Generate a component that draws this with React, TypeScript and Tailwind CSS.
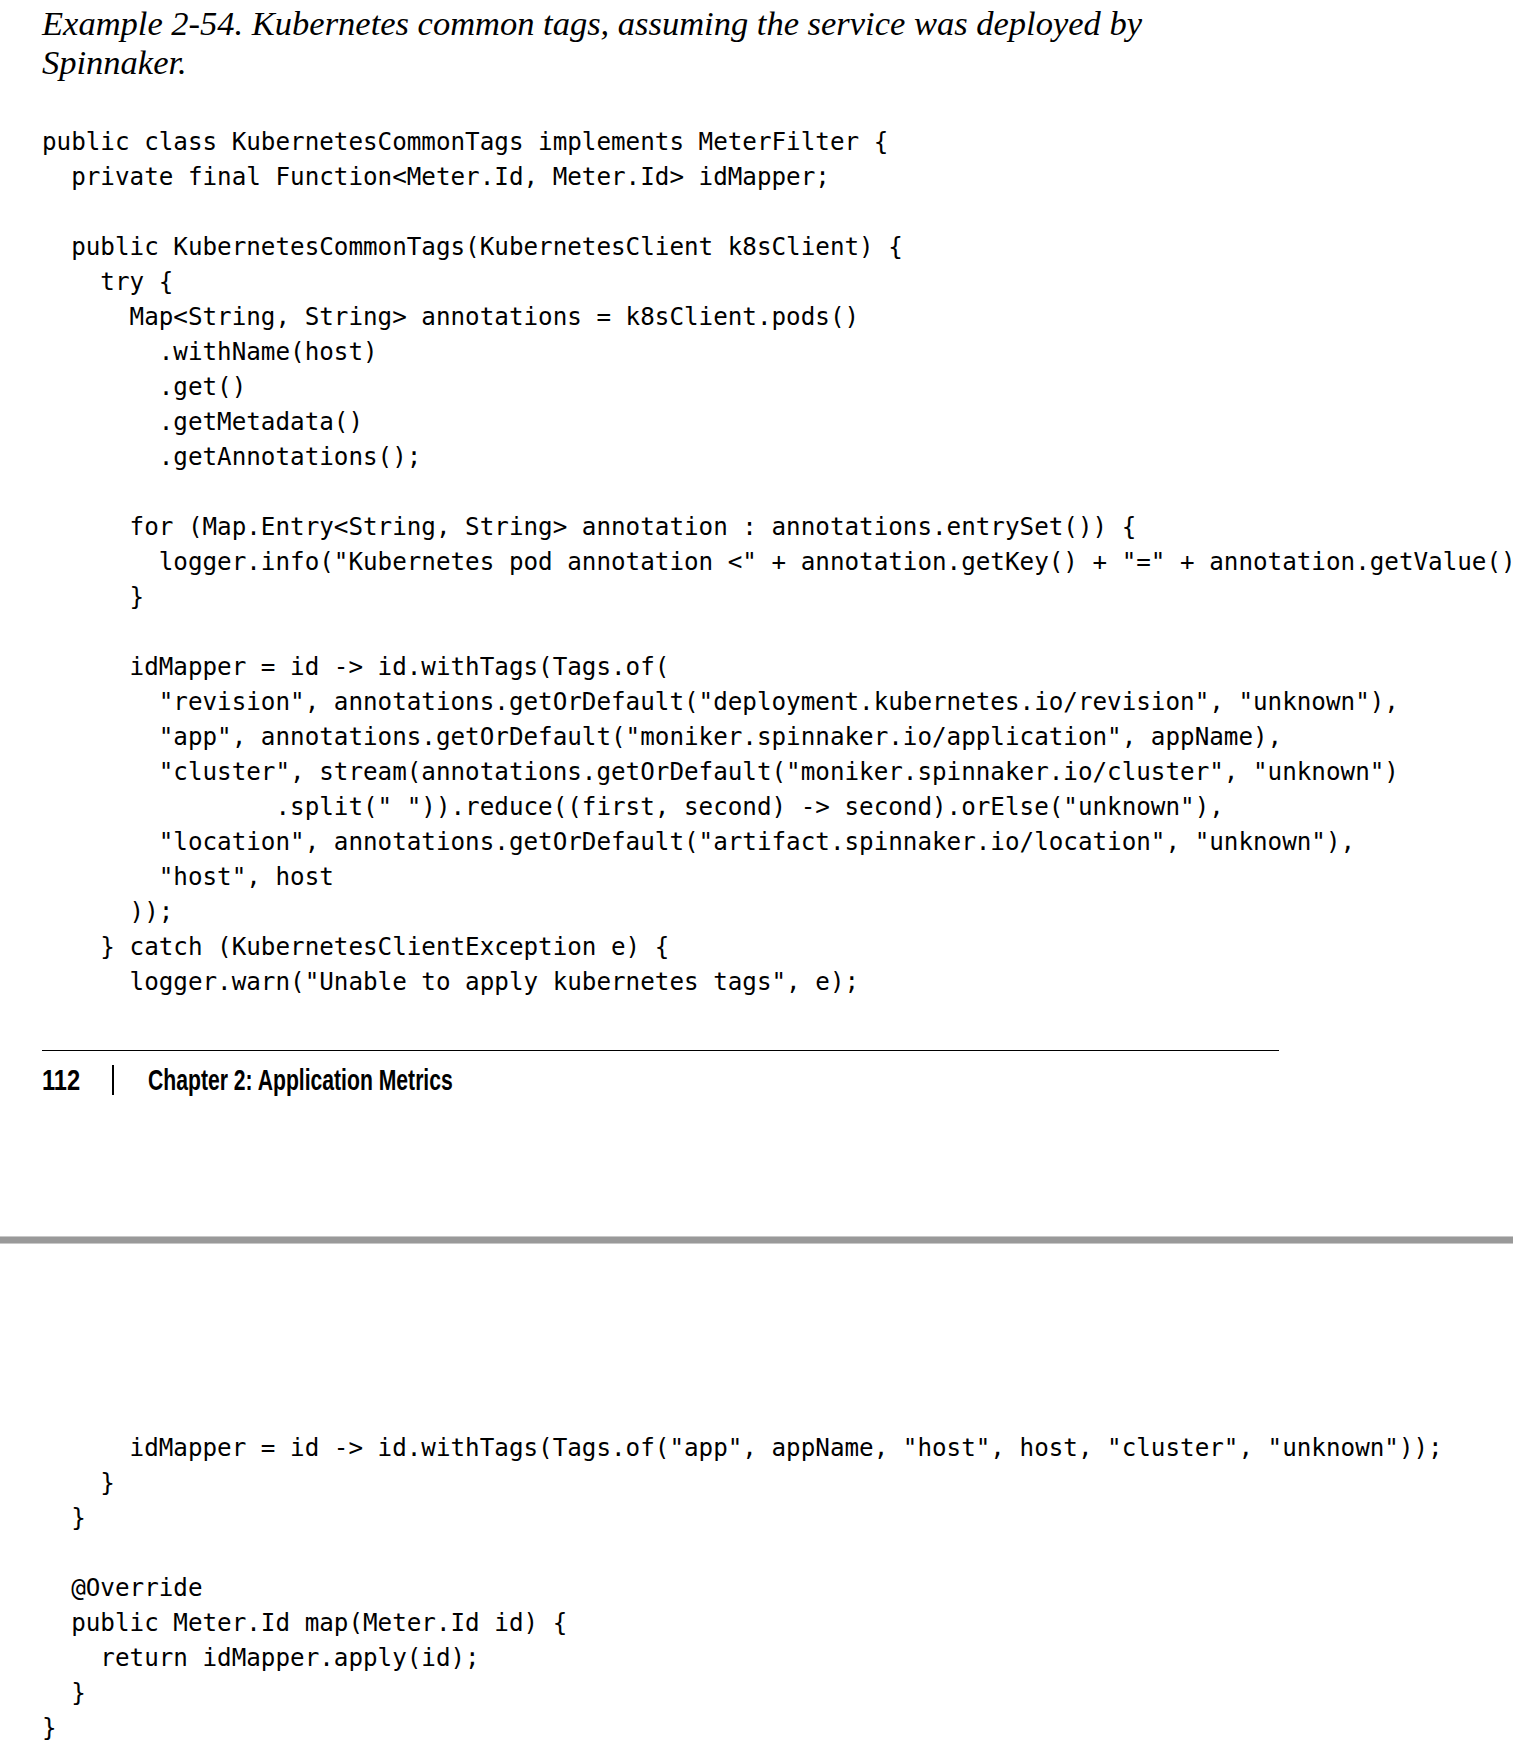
import * as React from 'react'

const topCode = [
  'public class KubernetesCommonTags implements MeterFilter {',
  '  private final Function<Meter.Id, Meter.Id> idMapper;',
  '',
  '  public KubernetesCommonTags(KubernetesClient k8sClient) {',
  '    try {',
  '      Map<String, String> annotations = k8sClient.pods()',
  '        .withName(host)',
  '        .get()',
  '        .getMetadata()',
  '        .getAnnotations();',
  '',
  '      for (Map.Entry<String, String> annotation : annotations.entrySet()) {',
  '        logger.info("Kubernetes pod annotation <" + annotation.getKey() + "=" + annotation.getValue() + ">");',
  '      }',
  '',
  '      idMapper = id -> id.withTags(Tags.of(',
  '        "revision", annotations.getOrDefault("deployment.kubernetes.io/revision", "unknown"),',
  '        "app", annotations.getOrDefault("moniker.spinnaker.io/application", appName),',
  '        "cluster", stream(annotations.getOrDefault("moniker.spinnaker.io/cluster", "unknown")',
  '                .split(" ")).reduce((first, second) -> second).orElse("unknown"),',
  '        "location", annotations.getOrDefault("artifact.spinnaker.io/location", "unknown"),',
  '        "host", host',
  '      ));',
  '    } catch (KubernetesClientException e) {',
  '      logger.warn("Unable to apply kubernetes tags", e);',
]

const bottomCode = [
  '      idMapper = id -> id.withTags(Tags.of("app", appName, "host", host, "cluster", "unknown"));',
  '    }',
  '  }',
  '',
  '  @Override',
  '  public Meter.Id map(Meter.Id id) {',
  '    return idMapper.apply(id);',
  '  }',
  '}',
]

const CodeBlock: React.FC<{ lines: string[] }> = ({ lines }) => {
  return (
    <pre className="m-0 whitespace-pre font-['DejaVu_Sans_Mono',monospace] text-[24.24px] leading-[35px] text-black">
      {lines.map((l, i) => (
        <div key={i} className="h-[35px]">{l}</div>
      ))}
    </pre>
  )
}

export default function App() {
  return (
    <div className="w-[1513px] h-[1748px] overflow-hidden bg-white text-black">
      <div className="pl-[42px] pt-[4px]">
        <h1 className="whitespace-nowrap font-['Liberation_Serif',serif] italic font-normal text-[34.5px] leading-[39px]">
          Example 2-54. Kubernetes common tags, assuming the service was deployed by
          <br />
          Spinnaker.
        </h1>

        <div className="mt-[42px]">
          <CodeBlock lines={topCode} />
        </div>

        <div className="mt-[51px] w-[1237px] h-px bg-black" />

        {/* page footer: condensed semibold face, squeezed horizontally */}
        <div className="mt-[13px] flex h-[32px] items-center font-['Liberation_Sans',sans-serif] font-bold text-[30px] leading-[32px]">
          <span className="w-[70px] whitespace-nowrap">
            <span className="inline-block origin-left scale-x-[0.79]">112</span>
          </span>
          <span className="w-[2px] h-[30px] bg-black" />
          <span className="ml-[34px] whitespace-nowrap">
            <span className="inline-block origin-left scale-x-[0.705]">Chapter 2: Application Metrics</span>
          </span>
        </div>
      </div>

      <div className="mt-[140px] h-[8px] w-full border-y border-[#c8c8c8] bg-[#999999]" />

      <div className="pl-[42px] mt-[186px]">
        <CodeBlock lines={bottomCode} />
      </div>
    </div>
  )
}
